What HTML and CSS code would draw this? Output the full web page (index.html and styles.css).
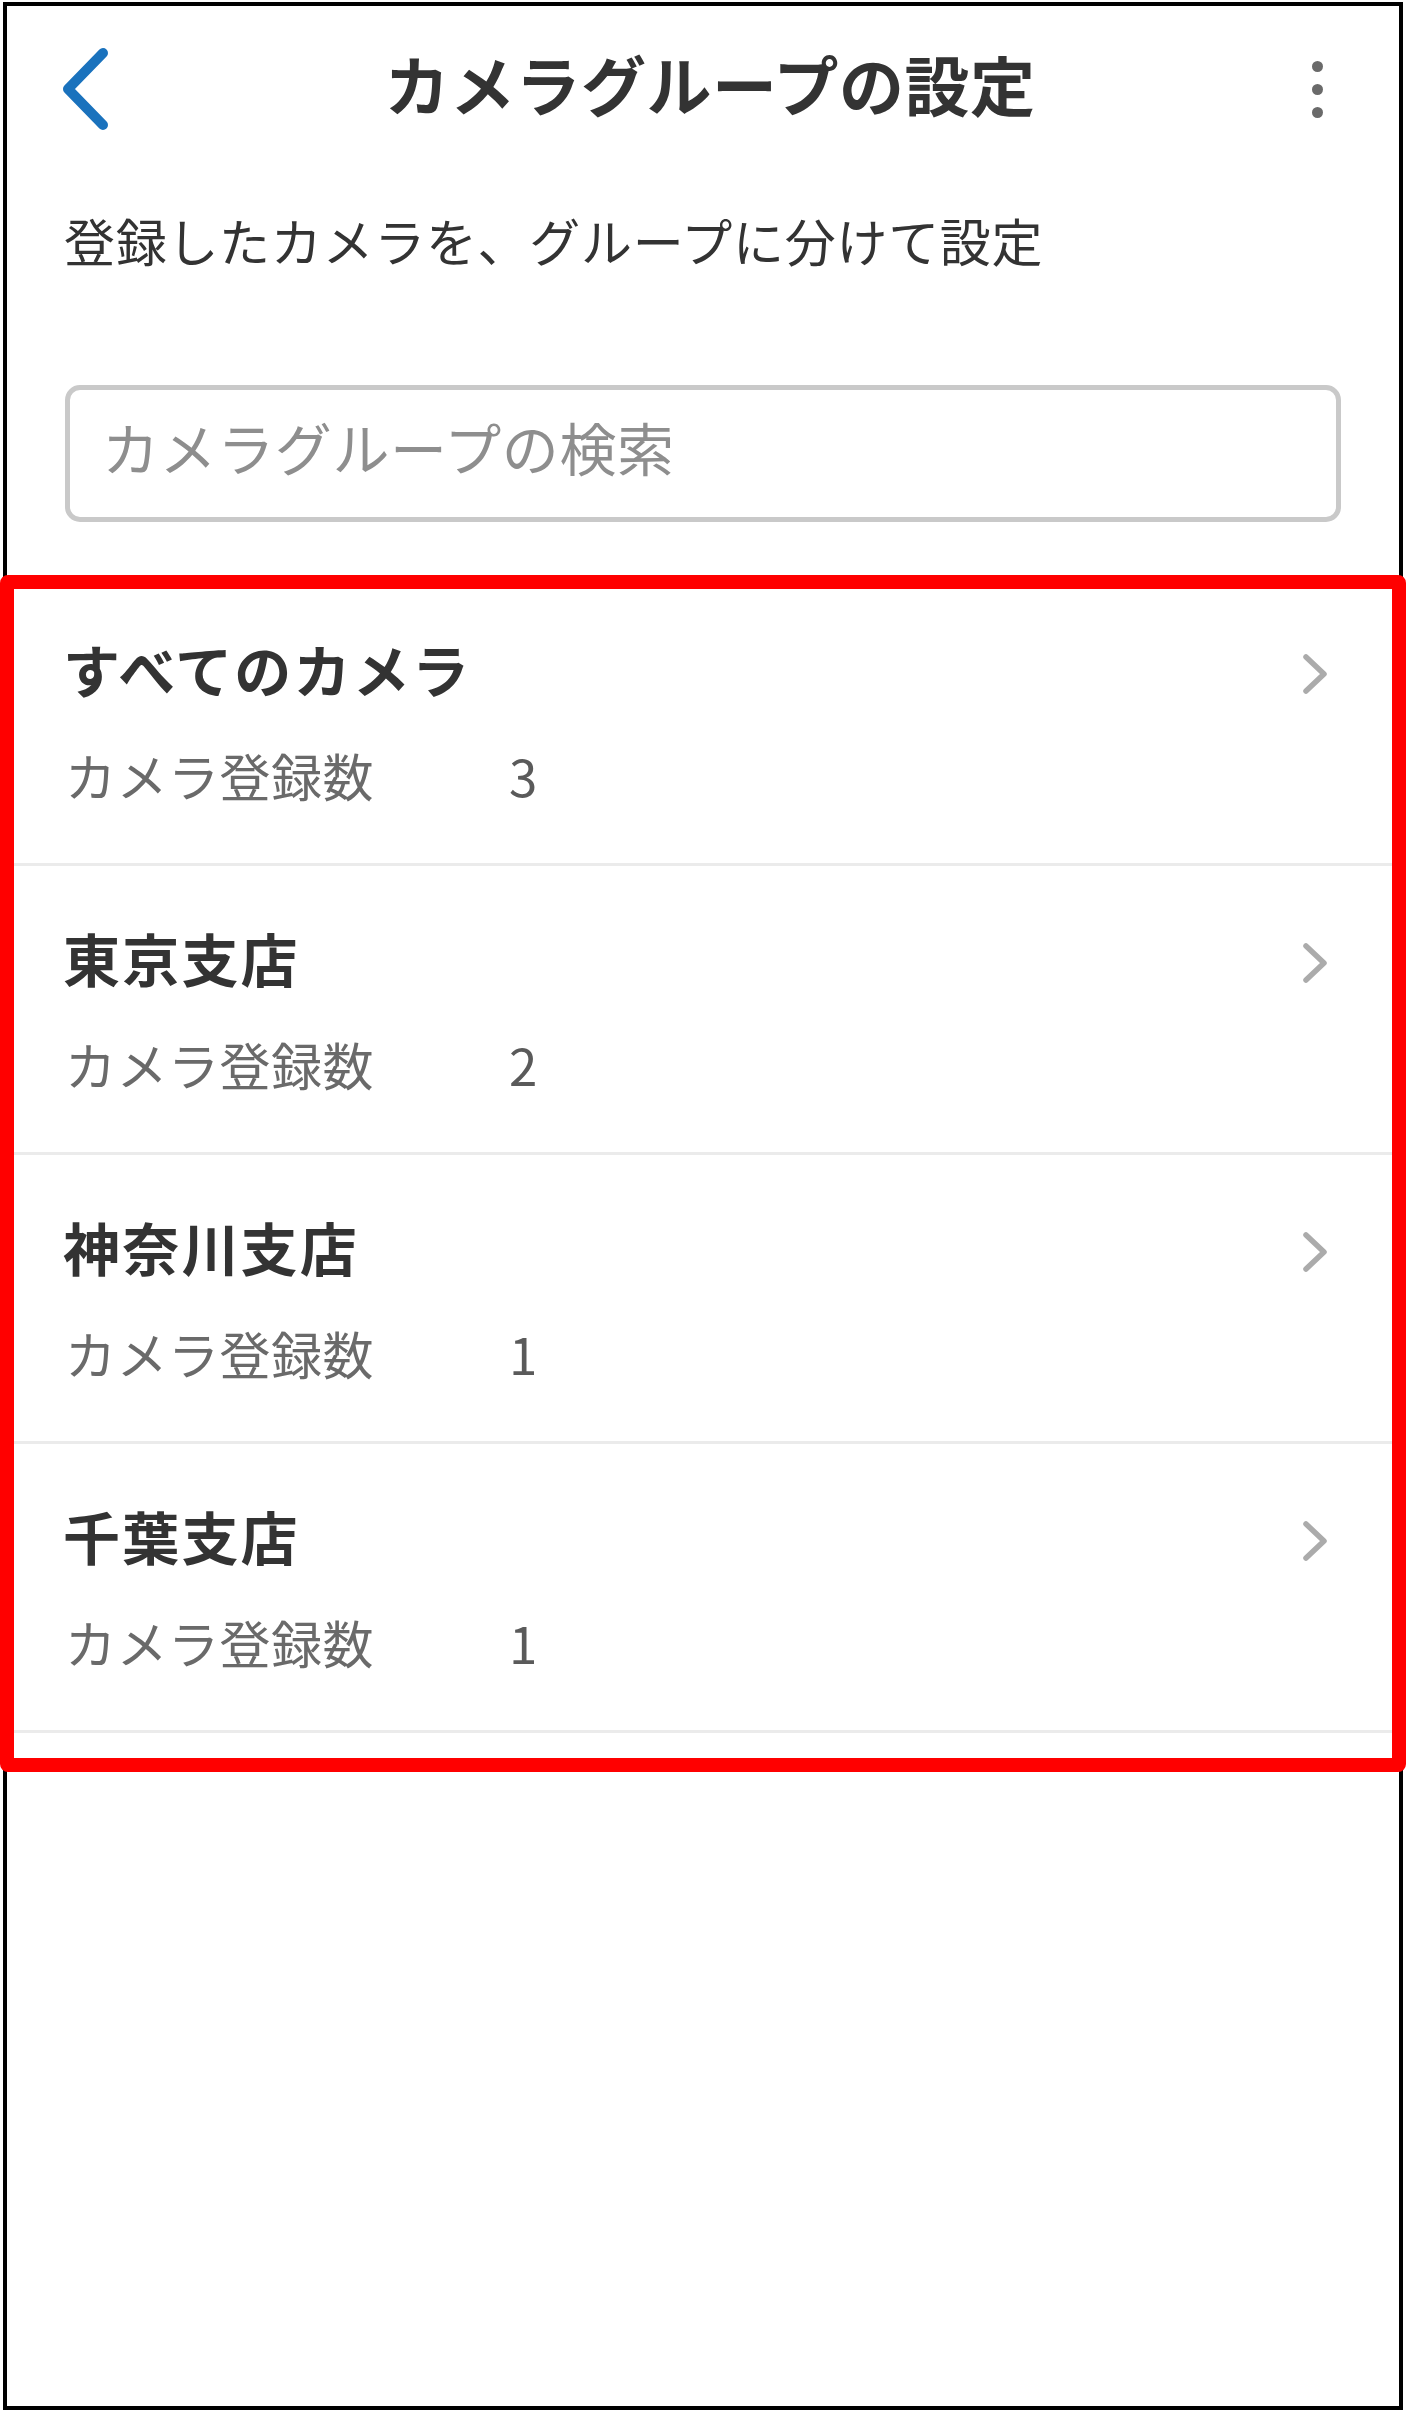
FILE: index.html
```html
<!DOCTYPE html>
<html lang="ja">
<head>
<meta charset="utf-8">
<title>カメラグループの設定</title>
<link rel="stylesheet" href="styles.css">
</head>
<body>
<div class="frame">
  <header class="appbar">
    <button class="icon-btn back" aria-label="戻る">
      <svg width="48" height="84" viewBox="0 0 48 84"><path d="M41 6 L6 42 L41 78" fill="none" stroke="#1a72bd" stroke-width="10" stroke-linecap="round" stroke-linejoin="round"/></svg>
    </button>
    <h1 class="title">カメラグループの設定</h1>
    <button class="icon-btn more" aria-label="メニュー">
      <span class="dot"></span><span class="dot"></span><span class="dot"></span>
    </button>
  </header>

  <p class="lead">登録したカメラを、グループに分けて設定</p>

  <div class="search">
    <span class="placeholder">カメラグループの検索</span>
  </div>

  <ul class="groups">
    <li class="group">
      <div class="group-head">
        <span class="group-name">すべてのカメラ</span>
        <svg class="chev" width="30" height="44" viewBox="0 0 30 44"><path d="M6 5 L24 22 L6 39" fill="none" stroke="#ababab" stroke-width="5.5" stroke-linecap="round" stroke-linejoin="round"/></svg>
      </div>
      <div class="group-meta"><span class="meta-label">カメラ登録数</span><span class="meta-num">3</span></div>
    </li>
    <li class="group">
      <div class="group-head">
        <span class="group-name">東京支店</span>
        <svg class="chev" width="30" height="44" viewBox="0 0 30 44"><path d="M6 5 L24 22 L6 39" fill="none" stroke="#ababab" stroke-width="5.5" stroke-linecap="round" stroke-linejoin="round"/></svg>
      </div>
      <div class="group-meta"><span class="meta-label">カメラ登録数</span><span class="meta-num">2</span></div>
    </li>
    <li class="group">
      <div class="group-head">
        <span class="group-name">神奈川支店</span>
        <svg class="chev" width="30" height="44" viewBox="0 0 30 44"><path d="M6 5 L24 22 L6 39" fill="none" stroke="#ababab" stroke-width="5.5" stroke-linecap="round" stroke-linejoin="round"/></svg>
      </div>
      <div class="group-meta"><span class="meta-label">カメラ登録数</span><span class="meta-num">1</span></div>
    </li>
    <li class="group">
      <div class="group-head">
        <span class="group-name">千葉支店</span>
        <svg class="chev" width="30" height="44" viewBox="0 0 30 44"><path d="M6 5 L24 22 L6 39" fill="none" stroke="#ababab" stroke-width="5.5" stroke-linecap="round" stroke-linejoin="round"/></svg>
      </div>
      <div class="group-meta"><span class="meta-label">カメラ登録数</span><span class="meta-num">1</span></div>
    </li>
  </ul>
</div>
<div class="highlight" aria-hidden="true"></div>
</body>
</html>
```

FILE: styles.css
```css
* { box-sizing: border-box; }

html, body {
  margin: 0;
  padding: 0;
  background: #ffffff;
}

body {
  position: relative;
  width: 1406px;
  height: 2413px;
  overflow: hidden;
  font-family: "Noto Sans CJK JP", "Noto Sans", sans-serif;
  color: #333333;
}

.frame {
  width: 1400px;
  height: 2408px;
  margin: 2px 0 0 3px;
  border: 4px solid #000000;
  background: #ffffff;
  display: flex;
  flex-direction: column;
}

.appbar {
  height: 154px;
  display: flex;
  align-items: center;
  justify-content: space-between;
  padding: 0 69px 0 55px;
}

.icon-btn {
  background: none;
  border: 0;
  padding: 0;
  margin: 0;
  display: flex;
}

.back {
  width: 48px;
  margin-top: 12px;
}

.title {
  margin: 0 0 0 4px;
  font-size: 65px;
  line-height: 1;
  font-weight: 700;
  color: #333333;
  letter-spacing: 0.5px;
}

.more {
  width: 24px;
  flex-direction: column;
  align-items: center;
  gap: 12px;
  margin-top: 12px;
}

.dot {
  width: 11px;
  height: 11px;
  border-radius: 50%;
  background: #6a6a6a;
}

.lead {
  margin: 44px 0 0 57px;
  font-size: 51px;
  line-height: 72px;
  color: #333333;
  letter-spacing: 0.7px;
}

.search {
  margin: 109px 58px 0;
  height: 137px;
  border: 5px solid #c9c9c9;
  border-radius: 15px;
  display: flex;
  align-items: center;
  padding: 0 0 14px 32px;
}

.placeholder {
  font-size: 57px;
  line-height: 1;
  color: #8e8e8e;
  letter-spacing: 0.6px;
}

.groups {
  list-style: none;
  margin: 55px 0 0;
  padding: 0;
}

.group {
  height: 289px;
  padding: 56px 69px 0 56px;
  border-bottom: 3px solid #ebebeb;
}

.group-head {
  display: flex;
  align-items: center;
  justify-content: space-between;
  height: 70px;
}

.group-name {
  font-size: 57px;
  line-height: 70px;
  font-weight: 700;
  color: #333333;
  letter-spacing: 2.2px;
}

.chev {
  margin-top: 12px;
}

.group-meta {
  margin-top: 40px;
  display: flex;
  font-size: 51px;
  line-height: 64px;
  color: #6a6a6a;
  padding-left: 2px;
}

.meta-label {
  width: 444px;
  letter-spacing: 0.5px;
}

.meta-num {
  color: #5a5a5a;
}

.highlight {
  position: absolute;
  left: 0;
  top: 575px;
  width: 1406px;
  height: 1197px;
  border: 14px solid #ff0000;
  border-radius: 8px;
  pointer-events: none;
}
```
